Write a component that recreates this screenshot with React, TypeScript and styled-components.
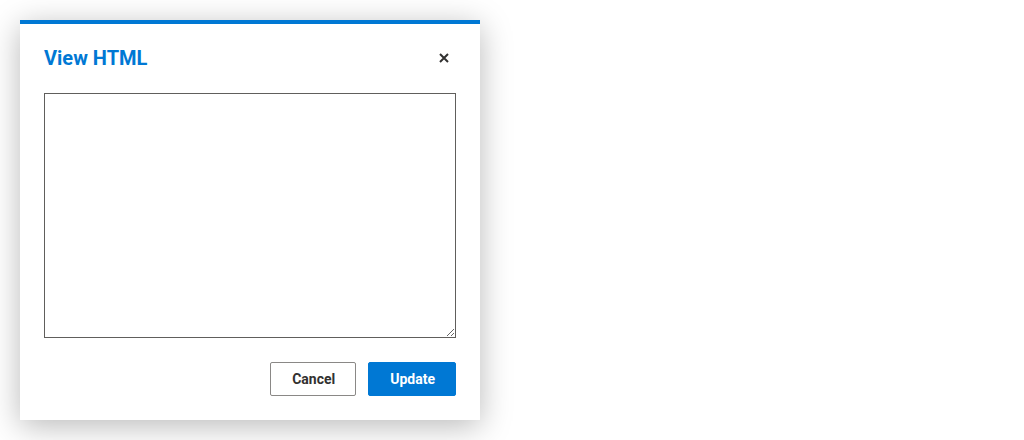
import React from 'react';
import styled, { createGlobalStyle } from 'styled-components';

const GlobalStyle = createGlobalStyle`
  html, body {
    margin: 0;
    padding: 0;
    background: #ffffff;
    font-family: Roboto, "Liberation Sans", sans-serif;
  }
`;

const Page = styled.div`
  width: 1024px;
  height: 440px;
  padding: 20px 0 0 20px;
  box-sizing: border-box;
  overflow: hidden;
`;

const Dialog = styled.div`
  width: 460px;
  height: 400px;
  box-sizing: border-box;
  background: #ffffff;
  border-top: 4px solid #0078d4;
  box-shadow: 0 6px 30px rgba(0, 0, 0, 0.28);
  padding: 0 24px 24px;
  display: flex;
  flex-direction: column;
`;

const Header = styled.div`
  display: flex;
  align-items: center;
  justify-content: space-between;
  height: 68px;
`;

const Title = styled.h2`
  margin: 0;
  font-size: 20px;
  font-weight: 700;
  color: #0078d4;
`;

const CloseButton = styled.button`
  border: none;
  background: none;
  padding: 0;
  width: 24px;
  height: 24px;
  display: flex;
  align-items: center;
  justify-content: center;
  cursor: pointer;
`;

const Editor = styled.textarea`
  margin-top: 1px;
  width: 412px;
  height: 245px;
  box-sizing: border-box;
  border: 1px solid #605e5c;
  border-radius: 0;
  resize: both;
  font-family: inherit;
  font-size: 14px;
  outline: none;
`;

const Footer = styled.div`
  margin-top: auto;
  display: flex;
  justify-content: flex-end;
  gap: 12px;
`;

const Button = styled.button<{ $primary?: boolean }>`
  height: 34px;
  padding: 0 20px 0 21px;
  border-radius: 2px;
  font-family: inherit;
  font-size: 14px;
  font-weight: 700;
  cursor: pointer;
  border: 1px solid ${({ $primary }) => ($primary ? '#0078d4' : '#8a8886')};
  background: ${({ $primary }) => ($primary ? '#0078d4' : '#ffffff')};
  color: ${({ $primary }) => ($primary ? '#ffffff' : '#323130')};
`;

const App: React.FC = () => (
  <>
    <GlobalStyle />
    <Page>
      <Dialog>
        <Header>
          <Title>View HTML</Title>
          <CloseButton aria-label="Close">
            <svg width="12" height="12" viewBox="0 0 12 12">
              <path d="M2 2 L10 10 M10 2 L2 10" stroke="#323130" strokeWidth="2" />
            </svg>
          </CloseButton>
        </Header>
        <Editor />
        <Footer>
          <Button>Cancel</Button>
          <Button $primary>Update</Button>
        </Footer>
      </Dialog>
    </Page>
  </>
);

export default App;
